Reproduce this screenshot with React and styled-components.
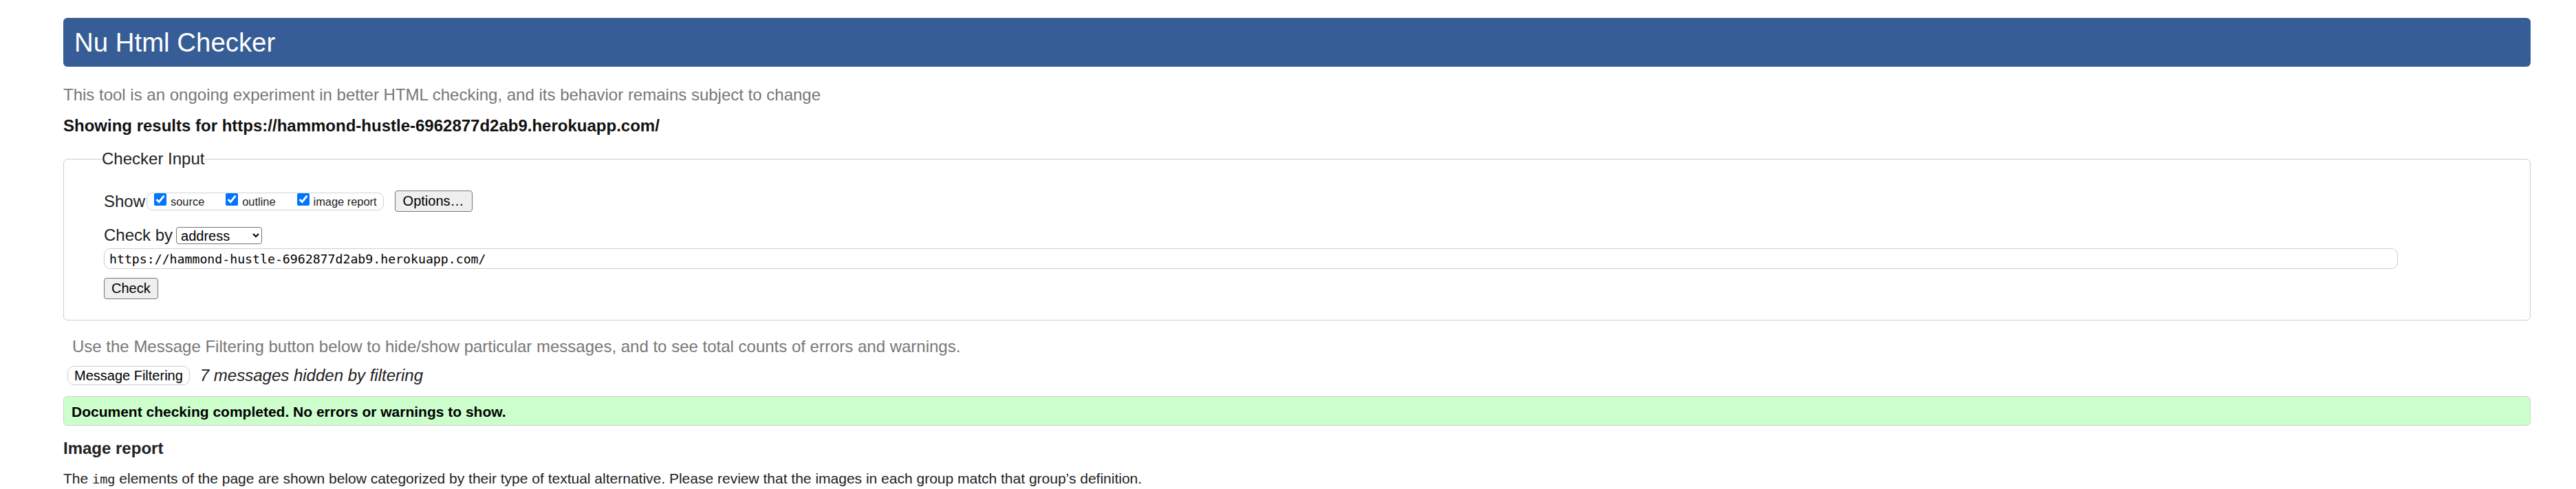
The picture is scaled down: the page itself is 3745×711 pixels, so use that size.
import React from "react"
import styled, { createGlobalStyle } from "styled-components"

const Global = createGlobalStyle`
body {
  margin: 0;
  background: #ffffff;
  font-family: "Liberation Sans", Arial, sans-serif;
  color: #222;
}
`

const Page = styled.div`
display: flex;
flex-direction: column;
padding: 26px 66px 0 92px;
`

const Title = styled.h1`
margin: 0;
height: 71px;
box-sizing: border-box;
display: flex;
align-items: center;
padding: 0 16px;
background-color: #365d95;
color: #fff;
font-size: 38.4px;
font-weight: normal;
border-radius: 6px;
`

const Note = styled.p`
margin: ${(p) => p.$top || 0}px 0 0 ${(p) => p.$indent || 0}px;
font-size: 24px;
color: #777;
`

const Results = styled.p`
margin: 17px 0 0;
font-size: 24px;
font-weight: bold;
color: #111;
`

const Fieldset = styled.fieldset`
margin: 20px 0 0;
padding: 32px 58px 30px 58px;
border: 1px solid #cfcfcf;
border-radius: 6px;
display: flex;
flex-direction: column;
align-items: flex-start;
`

const Legend = styled.legend`
padding: 0;
margin-left: -3px;
font-size: 24px;
color: #222;
`

const Row = styled.div`
display: flex;
align-items: center;
gap: ${(p) => p.$gap || 0}px;
margin-top: ${(p) => p.$top || 0}px;
font-size: 24px;
`

const Choices = styled.div`
display: flex;
align-items: baseline;
gap: 31px;
height: 26px;
box-sizing: border-box;
padding: 0 9px 0 10px;
margin-left: 2px;
border: 1px solid #d3d3d3;
border-radius: 9px;
`

const Choice = styled.label`
display: flex;
align-items: baseline;
font-size: 16.4px;
color: #222;
`

const Tick = styled.input`
width: 18px;
height: 18px;
margin: 0 6px 0 0;
accent-color: #0075ff;
`

const Button = styled.button`
font-family: "Liberation Sans", Arial, sans-serif;
font-size: 20px;
color: #000;
height: ${(p) => p.$h || 31}px;
padding: 0 ${(p) => p.$pad || 10}px;
background: ${(p) => (p.$light ? "#fff" : "#efefef")};
border: 1px solid ${(p) => (p.$light ? "#cfcfcf" : "#767676")};
border-radius: ${(p) => (p.$light ? 10 : 4)}px;
margin-left: ${(p) => p.$left || 0}px;
`

const Select = styled.select`
width: 125px;
height: 25px;
margin-left: 5px;
padding: 0 2px;
font-family: "Liberation Sans", Arial, sans-serif;
font-size: 20px;
color: #000;
background: #fff;
border: 1px solid #767676;
border-radius: 4px;
`

const Address = styled.input`
margin-top: 5px;
width: calc(100% - 134px);
height: 30px;
box-sizing: border-box;
padding: 0 7px;
font-family: "DejaVu Sans Mono", "Liberation Mono", monospace;
font-size: 18.2px;
color: #000;
border: 1px solid #cfcfcf;
border-radius: 9px;
`

const Filter = styled.div`
display: flex;
align-items: center;
gap: 15px;
margin: 14px 0 0 6px;
`

const Hidden = styled.span`
font-size: 24px;
font-style: italic;
color: #222;
`

const Success = styled.div`
margin-top: 16px;
padding: 10px 11px 7px;
background: #ccffcc;
border: 1px solid #cfcfcf;
border-radius: 6px;
font-size: 21px;
font-weight: bold;
color: #000;
`

const Heading = styled.h2`
margin: 19px 0 0;
font-size: 24px;
font-weight: bold;
color: #222;
`

const Text = styled.p`
margin: 18px 0 0;
font-size: 21px;
color: #222;
`

const Code = styled.code`
font-family: "DejaVu Sans Mono", "Liberation Mono", monospace;
font-size: 18.5px;
`

const App = () => {
  return (
    <Page>
      <Global />
      <Title>Nu Html Checker</Title>
      <Note $top={27}>This tool is an ongoing experiment in better HTML checking, and its behavior remains subject to change</Note>
      <Results>Showing results for https://hammond-hustle-6962877d2ab9.herokuapp.com/</Results>
      <Fieldset>
        <Legend>Checker Input</Legend>
        <Row>
          Show
          <Choices>
            <Choice><Tick type="checkbox" defaultChecked />source</Choice>
            <Choice><Tick type="checkbox" defaultChecked />outline</Choice>
            <Choice><Tick type="checkbox" defaultChecked />image report</Choice>
          </Choices>
          <Button $left={16} $pad={11}>Options…</Button>
        </Row>
        <Row $top={20}>
          Check by
          <Select defaultValue="address">
            <option value="address">address</option>
            <option value="file">file upload</option>
            <option value="text">text input</option>
          </Select>
        </Row>
        <Address type="url" defaultValue="https://hammond-hustle-6962877d2ab9.herokuapp.com/" />
        <Row $top={13}>
          <Button>Check</Button>
        </Row>
      </Fieldset>
      <Note $top={24} $indent={13}>Use the Message Filtering button below to hide/show particular messages, and to see total counts of errors and warnings.</Note>
      <Filter>
        <Button $light $h={28} $pad={9}>Message Filtering</Button>
        <Hidden>7 messages hidden by filtering</Hidden>
      </Filter>
      <Success>Document checking completed. No errors or warnings to show.</Success>
      <Heading>Image report</Heading>
      <Text>The <Code>img</Code> elements of the page are shown below categorized by their type of textual alternative. Please review that the images in each group match that group’s definition.</Text>
    </Page>
  )
}

export default App
